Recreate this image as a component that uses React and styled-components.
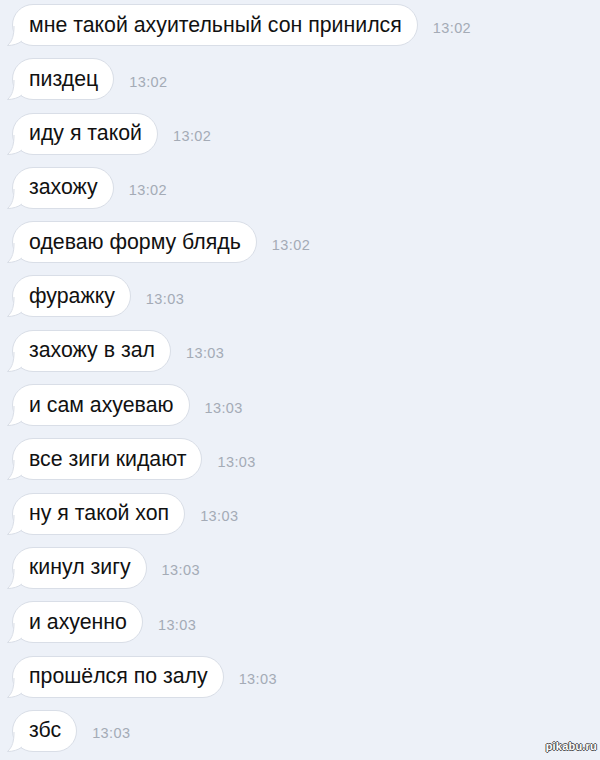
import React from 'react';
import styled, { createGlobalStyle } from 'styled-components';

const GlobalStyle = createGlobalStyle`
  html, body {
    margin: 0;
    padding: 0;
    background: #edf1f8;
  }
  body {
    font-family: "Liberation Sans", Arial, sans-serif;
  }
`;

const Page = styled.div`
  position: relative;
  width: 600px;
  height: 760px;
  overflow: hidden;
  background: #edf1f8;
  box-sizing: border-box;
  padding: 4px 0 0 12px;
  display: flex;
  flex-direction: column;
  gap: 12.3px;
`;

const Row = styled.div`
  display: flex;
  align-items: center;
  gap: 15px;
`;

const Bubble = styled.div`
  position: relative;
  height: 42px;
  box-sizing: border-box;
  padding: 0 15px 0 16px;
  display: flex;
  align-items: center;
  background: #fff;
  border: 1px solid #d9dee7;
  border-radius: 21px;
  font-size: 21.3px;
  color: #111;
  white-space: nowrap;
`;

const Label = styled.span`
  position: relative;
`;

const Tail = styled.svg`
  position: absolute;
  left: -6px;
  bottom: -1px;
  width: 20px;
  height: 22px;
  overflow: visible;
`;

const Time = styled.span`
  font-size: 14.5px;
  letter-spacing: 0.4px;
  color: #a4abb6;
  margin-top: 5px;
`;

const Watermark = styled.div`
  position: absolute;
  right: 3px;
  bottom: 8px;
  font-size: 11px;
  font-weight: bold;
  color: #fff;
  letter-spacing: 0.2px;
  text-shadow: -1px 0 #555, 1px 0 #555, 0 -1px #555, 0 1px #555;
`;

const messages = [
  ['мне такой ахуительный сон принился', '13:02'],
  ['пиздец', '13:02'],
  ['иду я такой', '13:02'],
  ['захожу', '13:02'],
  ['одеваю форму блядь', '13:02'],
  ['фуражку', '13:03'],
  ['захожу в зал', '13:03'],
  ['и сам ахуеваю', '13:03'],
  ['все зиги кидают', '13:03'],
  ['ну я такой хоп', '13:03'],
  ['кинул зигу', '13:03'],
  ['и ахуенно', '13:03'],
  ['прошёлся по залу', '13:03'],
  ['збс', '13:03'],
];

const BubbleTail = () => (
  <Tail viewBox="0 0 20 22">
    <path
      d="M7 0 C7 10 5.5 17 0.5 21.5 C6 21.5 11 20 15 17 L20 17 L20 0 Z"
      fill="#fff"
    />
    <path
      d="M7 2 C7 11 5.5 17 0.5 21.5 C6 21.5 11 20 15 17"
      fill="none"
      stroke="#d9dee7"
      strokeWidth="1"
    />
  </Tail>
);

export default function App() {
  return (
    <>
      <GlobalStyle />
      <Page>
        {messages.map(([text, time], i) => (
          <Row key={i}>
            <Bubble>
              <BubbleTail />
              <Label>{text}</Label>
            </Bubble>
            <Time>{time}</Time>
          </Row>
        ))}
        <Watermark>pikabu.ru</Watermark>
      </Page>
    </>
  );
}
